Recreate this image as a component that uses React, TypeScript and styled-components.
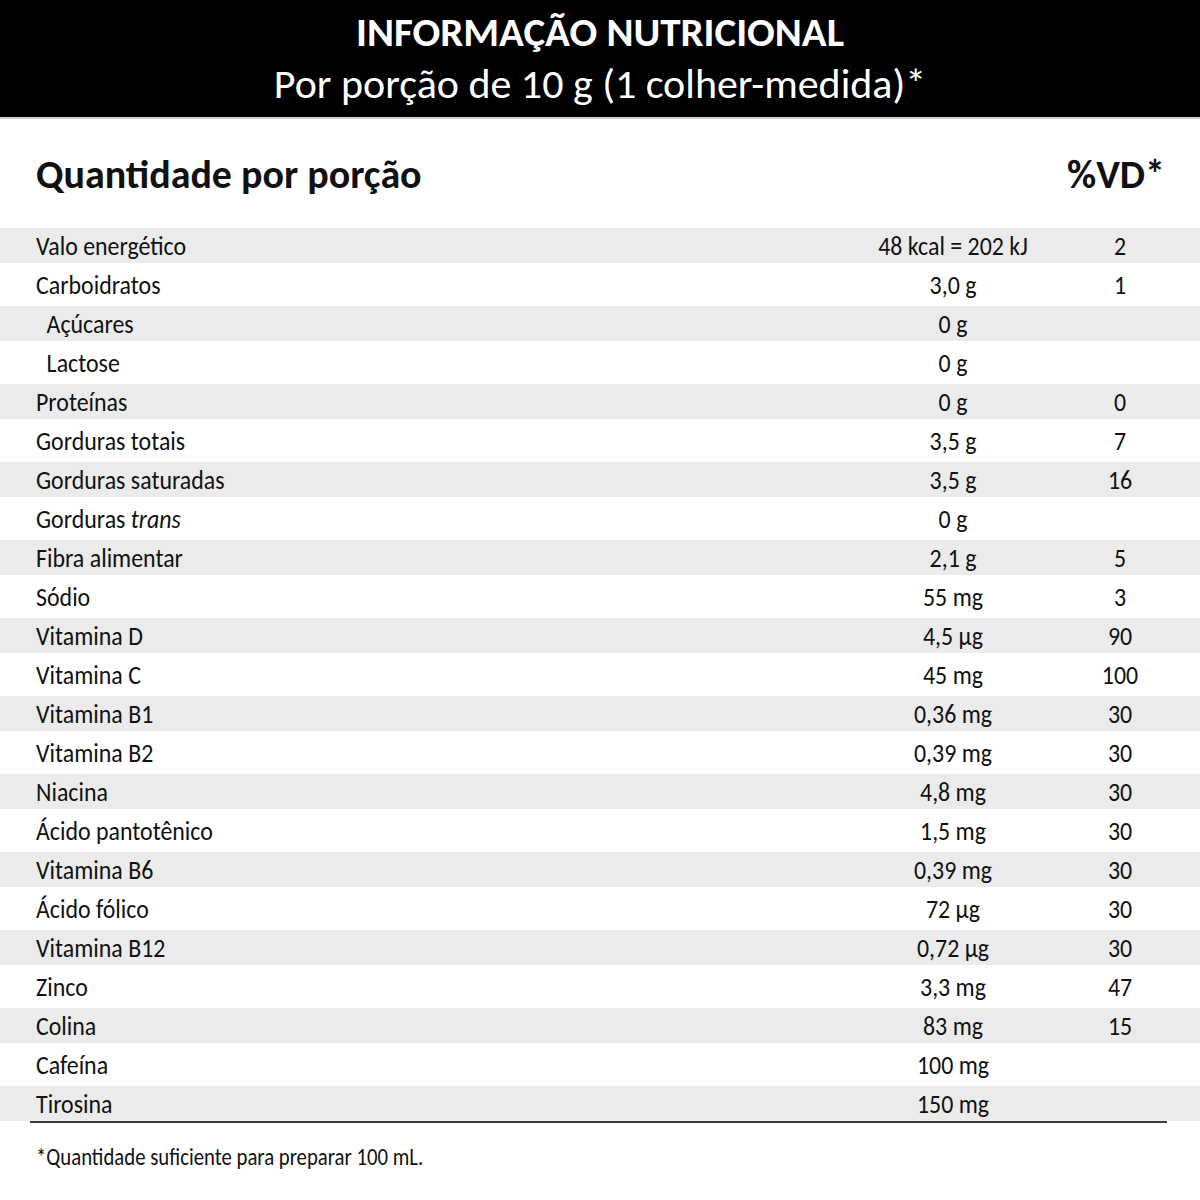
import React from "react";
import styled, { createGlobalStyle } from "styled-components";

const FONT = '"Carlito", "Liberation Sans Narrow", "DejaVu Sans Condensed", "Liberation Sans", sans-serif';

const Global = createGlobalStyle`
  html, body { margin: 0; padding: 0; background: #ffffff; }
  body { font-family: ${FONT}; color: #111111; }
`;

const Page = styled.div`
  width: 1200px;
  height: 1200px;
  background: #ffffff;
  display: flex;
  flex-direction: column;
  overflow: hidden;
`;

const Header = styled.header`
  height: 117px;
  background: #000000;
  border-bottom: 2px solid #d4d4d4;
  display: flex;
  flex-direction: column;
  align-items: center;
  justify-content: flex-start;
  color: #ffffff;
`;

const Title = styled.h1`
  margin: 10px 0 0;
  font-family: ${FONT};
  font-weight: 700;
  font-size: 41px;
  line-height: 44px;
`;

const Subtitle = styled.div`
  margin-top: 6px;
  font-family: ${FONT};
  font-weight: 400;
  font-size: 42px;
  line-height: 48px;
`;

const TableHead = styled.div`
  height: 109px;
  box-sizing: border-box;
  padding: 2px 35px 0 36px;
  display: flex;
  align-items: center;
  justify-content: space-between;
  font-family: ${FONT};
  font-weight: 700;
  font-size: 40px;
  color: #111111;
`;

const Rows = styled.div`
  display: flex;
  flex-direction: column;
  gap: 4px;
`;

const Row = styled.div<{ $shaded: boolean }>`
  height: 35px;
  display: grid;
  grid-template-columns: 1fr 220px 114px;
  align-items: center;
  padding: 0 23px 0 36px;
  background: ${(p) => (p.$shaded ? "#ebebeb" : "#ffffff")};
  font-family: ${FONT};
  font-size: 27px;
  line-height: 35px;
  color: #111111;
  white-space: nowrap;
`;

const Label = styled.span<{ $indent: boolean }>`
  padding-left: ${(p) => (p.$indent ? "12px" : "0")};
  transform: scaleX(0.885);
  transform-origin: left center;
`;

const Cell = styled.span`
  text-align: center;
  transform: scaleX(0.885);
  transform-origin: center center;
`;

const Rule = styled.div`
  height: 2px;
  background: #3a3a3a;
  margin: 0 33px 0 30px;
`;

const Footnote = styled.p`
  margin: 19px 0 0 36px;
  font-family: ${FONT};
  font-size: 25px;
  line-height: 30px;
  color: #111111;
  white-space: nowrap;
  transform: scaleX(0.83);
  transform-origin: left center;
`;

type Item = { label: React.ReactNode; value: string; vd?: string; indent?: boolean };

const items: Item[] = [
  { label: "Valo energético", value: "48 kcal = 202 kJ", vd: "2" },
  { label: "Carboidratos", value: "3,0 g", vd: "1" },
  { label: "Açúcares", value: "0 g", indent: true },
  { label: "Lactose", value: "0 g", indent: true },
  { label: "Proteínas", value: "0 g", vd: "0" },
  { label: "Gorduras totais", value: "3,5 g", vd: "7" },
  { label: "Gorduras saturadas", value: "3,5 g", vd: "16" },
  { label: <>Gorduras <i>trans</i></>, value: "0 g" },
  { label: "Fibra alimentar", value: "2,1 g", vd: "5" },
  { label: "Sódio", value: "55 mg", vd: "3" },
  { label: "Vitamina D", value: "4,5 µg", vd: "90" },
  { label: "Vitamina C", value: "45 mg", vd: "100" },
  { label: "Vitamina B1", value: "0,36 mg", vd: "30" },
  { label: "Vitamina B2", value: "0,39 mg", vd: "30" },
  { label: "Niacina", value: "4,8 mg", vd: "30" },
  { label: "Ácido pantotênico", value: "1,5 mg", vd: "30" },
  { label: "Vitamina B6", value: "0,39 mg", vd: "30" },
  { label: "Ácido fólico", value: "72 µg", vd: "30" },
  { label: "Vitamina B12", value: "0,72 µg", vd: "30" },
  { label: "Zinco", value: "3,3 mg", vd: "47" },
  { label: "Colina", value: "83 mg", vd: "15" },
  { label: "Cafeína", value: "100 mg" },
  { label: "Tirosina", value: "150 mg" },
];

export default function App() {
  return (
    <>
      <Global />
      <Page>
        <Header>
          <Title>INFORMAÇÃO NUTRICIONAL</Title>
          <Subtitle>Por porção de 10 g (1 colher-medida)*</Subtitle>
        </Header>
        <TableHead>
          <span>Quantidade por porção</span>
          <span>%VD*</span>
        </TableHead>
        <Rows>
          {items.map((it, i) => (
            <Row key={i} $shaded={i % 2 === 0}>
              <Label $indent={!!it.indent}>{it.label}</Label>
              <Cell>{it.value}</Cell>
              <Cell>{it.vd ?? ""}</Cell>
            </Row>
          ))}
        </Rows>
        <Rule />
        <Footnote>*Quantidade suficiente para preparar 100 mL.</Footnote>
      </Page>
    </>
  );
}
